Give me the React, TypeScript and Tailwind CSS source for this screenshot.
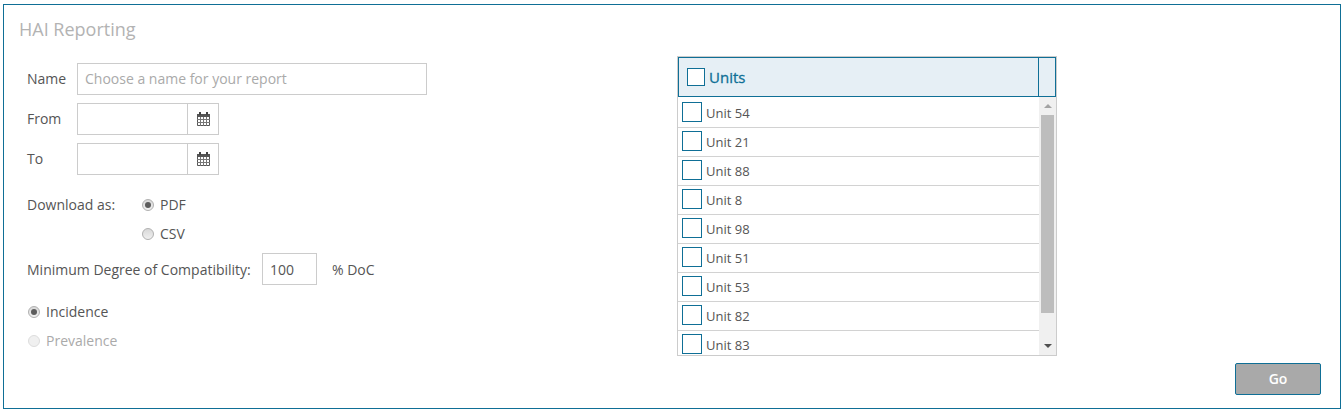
const units = ['Unit 54', 'Unit 21', 'Unit 88', 'Unit 8', 'Unit 98', 'Unit 51', 'Unit 53', 'Unit 82', 'Unit 83'];

function CalendarIcon() {
  return (
    <svg width="13" height="14" viewBox="0 0 13 14" className="block">
      <path d="M.5 2.5h12v11H.5z" fill="#fff" stroke="#555555" strokeWidth="1" />
      <path d="M0 2h13v3H0z" fill="#555555" />
      <path d="M0 7.5h13M0 10.5h13M3.5 5v9M6.5 5v9M9.5 5v9" stroke="#777777" strokeWidth="1" fill="none" />
      <path d="M2 0h2v3H2zM9 0h2v3H9z" fill="#444444" />
    </svg>
  );
}

function DateField() {
  return (
    <div className="flex w-[142px] h-[32px] border border-[#cccccc]">
      <div className="w-[110px] border-r border-[#cccccc]" />
      <div className="flex flex-1 items-center justify-center pb-[1px]">
        <CalendarIcon />
      </div>
    </div>
  );
}

function Radio({ checked, disabled }: { checked?: boolean; disabled?: boolean }) {
  return (
    <span
      className={`flex h-[12px] w-[12px] shrink-0 items-center justify-center rounded-full border ${
        disabled ? 'border-[#dddddd] bg-[#f0f0f0]' : 'border-[#b0b0b0] bg-gradient-to-b from-[#d8d8d8] to-[#f0f0f0]'
      }`}
    >
      {checked && <span className="h-[6px] w-[6px] rounded-full bg-[#5c5c5c]" />}
    </span>
  );
}

export default function App() {
  return (
    <div className="h-[415px] bg-white pt-[4px] pl-[3px] pr-[3px] font-['Open_Sans',sans-serif] text-[14px] text-[#555555]">
      <div className="relative flex h-[405px] border border-[#0f6f96]">
        {/* left form */}
        <div className="w-[673px] pl-[15px]">
          <h1 className="mt-[11px] h-[26px] text-[18px] leading-[26px] text-[#b3b3b3]">HAI Reporting</h1>
          <div className="mt-[21px] pl-[8px]">
            <div className="flex h-[32px] items-center">
              <span className="w-[50px] pb-[2px]">Name</span>
              <div className="flex h-[32px] w-[350px] items-center border border-[#cccccc] pb-[2px] pl-[7px] text-[#aaaaaa]">
                Choose a name for your report
              </div>
            </div>
            <div className="mt-[8px] flex h-[32px] items-center">
              <span className="w-[50px] pb-[2px]">From</span>
              <DateField />
            </div>
            <div className="mt-[8px] flex h-[32px] items-center">
              <span className="w-[50px] pb-[2px]">To</span>
              <DateField />
            </div>
            <div className="mt-[15px] flex h-[29px] items-center">
              <span className="w-[115px]">Download as:</span>
              <Radio checked />
              <span className="ml-[6px]">PDF</span>
            </div>
            <div className="flex h-[29px] items-center pl-[115px]">
              <Radio />
              <span className="ml-[6px]">CSV</span>
            </div>
            <div className="mt-[5px] flex h-[32px] items-center">
              <span className="w-[235px]">Minimum Degree of Compatibility:</span>
              <div className="flex h-[32px] w-[55px] items-center border border-[#cccccc] pl-[7px]">100</div>
              <span className="ml-[15px]">% DoC</span>
            </div>
            <div className="mt-[12px] flex h-[29px] items-center pl-[1px]">
              <Radio checked />
              <span className="ml-[6px]">Incidence</span>
            </div>
            <div className="flex h-[29px] items-center pl-[1px] text-[#aaaaaa]">
              <Radio disabled />
              <span className="ml-[6px]">Prevalence</span>
            </div>
          </div>
        </div>

        {/* units list */}
        <div className="mt-[51px] h-[300px] w-[380px] border border-[#cccccc]">
          <div className="flex h-[40px] border border-[#0f6f96] bg-[#e6eff5]">
            <div className="flex flex-1 items-center pl-[8px]">
              <span className="h-[18px] w-[18px] border border-[#0f6f96] bg-white" />
              <span className="ml-[4px] text-[15px] text-[#0f6f96] [-webkit-text-stroke:0.3px_#0f6f96]">Units</span>
            </div>
            <div className="w-[17px] border-l border-[#0f6f96]" />
          </div>
          <div className="flex h-[258px]">
            <div className="flex-1 overflow-hidden pt-[2px]">
              {units.map((unit) => (
                <div key={unit} className="flex h-[29px] items-center border-b border-[#d2d2d2] pl-[4px] text-[13px]">
                  <span className="mb-[2px] h-[20px] w-[20px] shrink-0 border border-[#0f6f96]" />
                  <span className="ml-[4px] mt-[2px]">{unit}</span>
                </div>
              ))}
            </div>
            <div className="flex w-[17px] flex-col items-center bg-[#f0f0f0]">
              <div className="flex h-[18px] items-center justify-center">
                <span className="h-0 w-0 border-x-[4px] border-b-[4px] border-x-transparent border-b-[#a3a3a3]" />
              </div>
              <div className="h-[198px] w-[13px] bg-[#bdbdbd]" />
              <div className="flex flex-1 items-end justify-center pb-[7px]">
                <span className="h-0 w-0 border-x-[4px] border-t-[4px] border-x-transparent border-t-[#505050]" />
              </div>
            </div>
          </div>
        </div>

        {/* floats over the panel's bottom right corner */}
        <button className="absolute bottom-[13px] right-[19px] h-[32px] w-[86px] rounded-[2px] border border-[#0f6f96] bg-[#a9a9a9] pb-[2px] text-[14px] font-semibold text-white">
          Go
        </button>
      </div>
    </div>
  );
}
